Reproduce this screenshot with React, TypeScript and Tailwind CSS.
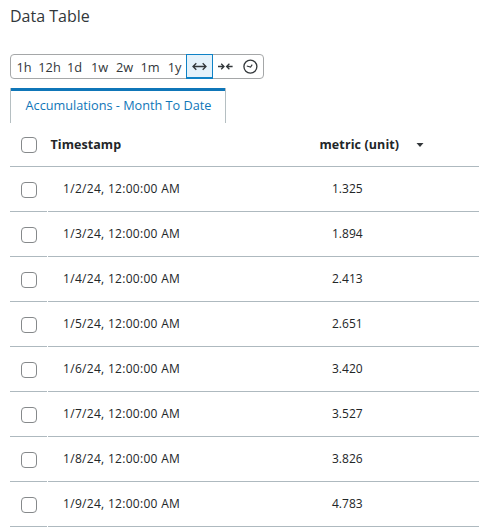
const ranges = ['1h', '12h', '1d', '1w', '2w', '1m', '1y'];
const widths = ['w-[26px]', 'w-[25px]', 'w-[25px]', 'w-[25px]', 'w-[25px]', 'w-[26px]', 'w-[23px]'];
const rows = [['2', '1.325'], ['3', '1.894'], ['4', '2.413'], ['5', '2.651'], ['6', '3.420'], ['7', '3.527'], ['8', '3.826'], ['9', '4.783']];

function Check({ className = '' }: { className?: string }) {
  return <div className={`h-[16px] w-[16px] shrink-0 rounded-[4px] border border-[#86898b] bg-white ${className}`} />;
}

function ExpandIcon() {
  return (
    <svg width="16" height="12" viewBox="0 0 16 12" fill="none" stroke="#32373a" strokeWidth="1.3">
      <path d="M1 6.5H14M4.3 3.2L1 6.5L4.3 9.8M10.7 3.2L14 6.5L10.7 9.8" />
    </svg>
  );
}

function CollapseIcon() {
  return (
    <svg width="16" height="12" viewBox="0 0 16 12" fill="none" stroke="#32373a" strokeWidth="1.3">
      <path d="M0 5.5H6M3.2 2.7L6 5.5L3.2 8.3M14.6 5.5H8.6M11.4 2.7L8.6 5.5L11.4 8.3" />
    </svg>
  );
}

function ClockIcon() {
  return (
    <svg width="16" height="16" viewBox="0 0 16 16" fill="none" stroke="#32373a" strokeWidth="1.3">
      <circle cx="7.4" cy="7.6" r="6.5" />
      <path d="M3.8 7L7.6 8L9.2 5.6" strokeWidth="1.1" />
    </svg>
  );
}

export default function App() {
  return (
    <div className="h-[527px] w-[479px] overflow-hidden bg-white pl-[10px] font-['Open_Sans',sans-serif] text-[#222628]">
      <h1 className="h-[54px] pt-[5px] text-[16px] leading-[22px] text-[#32373a]">Data Table</h1>
      <div className="flex h-[25px] w-[254px] rounded-[4px] border border-[#a5a7a8] text-[12.8px] leading-[25px] text-[#32373a]">
        {ranges.map((r, i) => (
          <div key={r} className={`${widths[i]} shrink-0 text-center`}>{r}</div>
        ))}
        <div className="-mt-px flex h-[25px] w-[27px] shrink-0 items-center justify-center border border-b-2 border-[#0f82c6] bg-[#e4f2fb]">
          <ExpandIcon />
        </div>
        <div className="flex w-[25px] shrink-0 items-center justify-center"><CollapseIcon /></div>
        <div className="flex w-[25px] shrink-0 items-center justify-center"><ClockIcon /></div>
      </div>
      <div className="mt-[9px] flex h-[35px] w-[216px] justify-center border-x border-x-[#b5bfc2]">
        <div className="w-full border-t-[3px] border-[#0f76b8] pl-px pt-[4px] text-center text-[12.7px] leading-[20px] text-[#0f76b8]">Accumulations - Month To Date</div>
      </div>
      <div className="flex h-[44px] items-center border-b border-[#aeb9bf] text-[12.5px] font-bold tracking-[0.06px]">
        <Check className="ml-[11px]" />
        <div className="ml-[13.5px] w-[269px] pt-[2px]">Timestamp</div>
        <div className="w-[96.5px] pt-[2px] tracking-[0.1px]">metric (unit)</div>
        <svg className="mt-px" width="8" height="4" viewBox="0 0 8 4"><path d="M0.5 0H7.5L4 4Z" fill="#32373a" /></svg>
      </div>
      {rows.map(([d, v]) => (
        <div key={d} className="flex h-[45px] gap-px text-[12px]">
          <div className="flex w-[37px] items-center border-b border-[#aeb9bf] pt-px">
            <Check className="ml-[11px]" />
          </div>
          <div className="flex flex-1 items-center border-b border-[#aeb9bf] pl-[15px]">
            <div className="w-[269px] tracking-[0.3px]">1/{d}/24, 12:00:00 AM</div>
            <div>{v}</div>
          </div>
        </div>
      ))}
    </div>
  );
}
